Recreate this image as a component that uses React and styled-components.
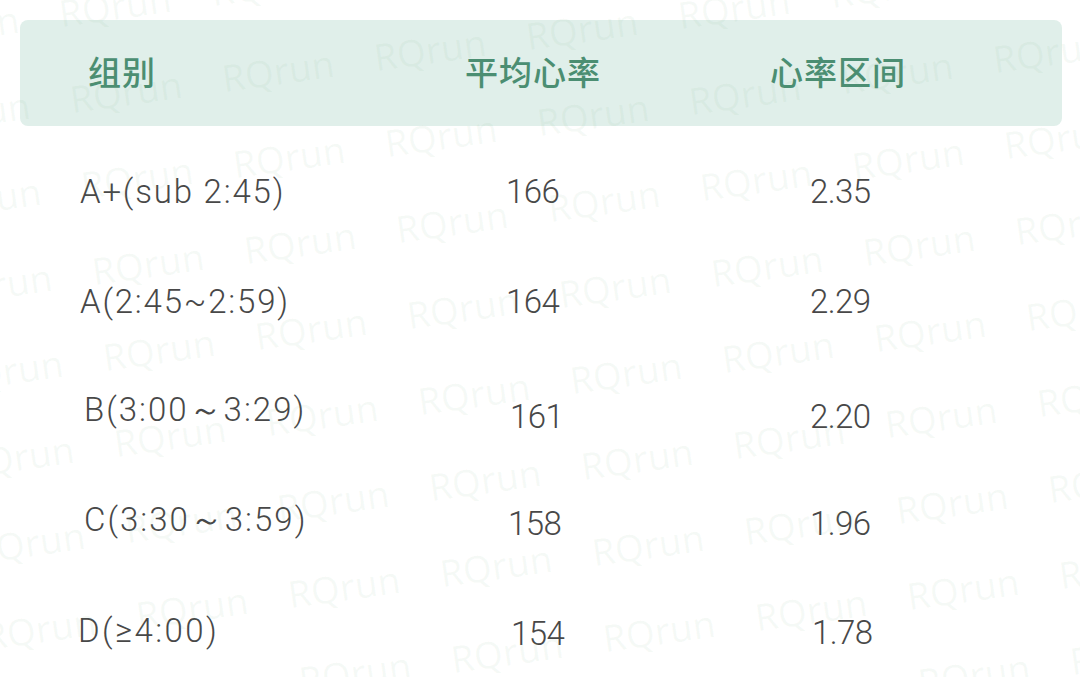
import styled, { createGlobalStyle } from "styled-components";

const GlobalStyle = createGlobalStyle`
  html, body {
    margin: 0;
    padding: 0;
    background: #ffffff;
  }
  body {
    font-family: Roboto, "Noto Sans CJK SC", sans-serif;
  }
`;

const Page = styled.div`
  position: relative;
  width: 1080px;
  height: 677px;
  overflow: hidden;
  background: #ffffff;
  padding: 20px 18px 0 20px;
  box-sizing: border-box;
`;

const HeaderBar = styled.div`
  display: grid;
  grid-template-columns: 377px 305px 1fr;
  align-items: center;
  height: 106px;
  padding-left: 68px;
  box-sizing: border-box;
  background: #e0efea;
  border-radius: 8px;
`;

const HeaderCell = styled.div`
  font-family: "Noto Sans CJK SC", sans-serif;
  font-size: 33px;
  font-weight: 500;
  color: #4b8e72;
  letter-spacing: 1px;
  padding-bottom: 4px;
`;

const Body = styled.div`
  padding-top: 10px;
`;

const Row = styled.div`
  display: grid;
  grid-template-columns: 426px 304px 1fr;
  align-items: center;
  height: 110px;
  padding-left: 60px;
`;

// 每个格子位置略有偏差，用 dx/dy 微调
const Cell = styled.div`
  font-family: Roboto, sans-serif;
  font-size: 33px;
  font-weight: 300;
  color: #484848;
  letter-spacing: ${(p) => p.$spacing ?? -0.6}px;
  white-space: nowrap;
  transform: translate(${(p) => p.$dx || 0}px, ${(p) => p.$dy || 0}px);
`;

const WatermarkLayer = styled.div`
  position: absolute;
  inset: 0;
  pointer-events: none;
`;

const Mark = styled.span`
  position: absolute;
  font-family: "Noto Sans", sans-serif;
  font-size: 37px;
  color: rgba(110, 170, 120, 0.06);
  transform: translateY(-50%) rotate(-8deg);
  transform-origin: left center;
  white-space: nowrap;
`;

const headers = ["组别", "平均心率", "心率区间"];

const rows = [
  { group: "A+(sub 2:45)", sp: 1.8, avg: "166", range: "2.35", off: [[0, 0], [0, 0], [0, 0]] },
  { group: "A(2:45~2:59)", sp: 1.8, avg: "164", range: "2.29", off: [[0, 0], [0, 0], [0, 0]] },
  { group: "B(3:00～3:29)", sp: 2, avg: "161", range: "2.20", off: [[4, -1], [4, 5], [0, 5]] },
  { group: "C(3:30～3:59)", sp: 2, avg: "158", range: "1.96", off: [[4, -1], [2, 2], [0, 2]] },
  { group: "D(≥4:00)", sp: 2.4, avg: "154", range: "1.78", off: [[-2, -1], [5, 2], [2, 1]] },
];

const marks = [];
for (let i = -3; i < 9; i++) {
  for (let j = -2; j < 10; j++) {
    const x = 222 + 152 * i + 11 * j;
    const y = 78 - 21 * i + 86 * j;
    if (x > -150 && x < 1100 && y > -40 && y < 720) {
      marks.push({ x, y, key: `${i}-${j}` });
    }
  }
}

export default function App() {
  return (
    <>
      <GlobalStyle />
      <Page>
        <HeaderBar>
          {headers.map((h) => (
            <HeaderCell key={h}>{h}</HeaderCell>
          ))}
        </HeaderBar>
        <Body>
          {rows.map((r) => (
            <Row key={r.group}>
              <Cell $spacing={r.sp} $dx={r.off[0][0]} $dy={r.off[0][1]}>
                {r.group}
              </Cell>
              <Cell $dx={r.off[1][0]} $dy={r.off[1][1]}>
                {r.avg}
              </Cell>
              <Cell $dx={r.off[2][0]} $dy={r.off[2][1]}>
                {r.range}
              </Cell>
            </Row>
          ))}
        </Body>
        <WatermarkLayer>
          {marks.map((m) => (
            <Mark key={m.key} style={{ left: m.x, top: m.y }}>
              RQrun
            </Mark>
          ))}
        </WatermarkLayer>
      </Page>
    </>
  );
}
